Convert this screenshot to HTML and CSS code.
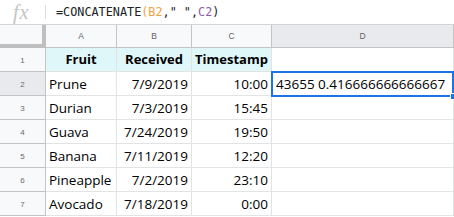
FILE: index.html
```html
<!DOCTYPE html>
<html>
<head>
<meta charset="utf-8">
<link rel="stylesheet" href="styles.css">
</head>
<body>
<div class="sheet">
  <div class="fbar">
    <span class="fx">fx</span>
    <span class="sep"></span>
    <span class="formula">=CONCATENATE<span class="ref1">(B2</span>,"&nbsp;",<span class="ref2">C2</span>)</span>
  </div>
  <div class="grid">
    <div class="corner"></div>
    <div class="colh">A</div>
    <div class="colh">B</div>
    <div class="colh">C</div>
    <div class="colh sel">D</div>

    <div class="rowh">1</div>
    <div class="c hdr">Fruit</div>
    <div class="c hdr">Received</div>
    <div class="c hdr">Timestamp</div>
    <div class="c"></div>

    <div class="rowh sel">2</div>
    <div class="c">Prune</div>
    <div class="c num">7/9/2019</div>
    <div class="c num">10:00</div>
    <div class="c active">43655 0.416666666666667<span class="selbox"><span class="handle"></span></span></div>

    <div class="rowh">3</div>
    <div class="c">Durian</div>
    <div class="c num">7/3/2019</div>
    <div class="c num">15:45</div>
    <div class="c"></div>

    <div class="rowh">4</div>
    <div class="c">Guava</div>
    <div class="c num">7/24/2019</div>
    <div class="c num">19:50</div>
    <div class="c"></div>

    <div class="rowh">5</div>
    <div class="c">Banana</div>
    <div class="c num">7/11/2019</div>
    <div class="c num">12:20</div>
    <div class="c"></div>

    <div class="rowh">6</div>
    <div class="c">Pineapple</div>
    <div class="c num">7/2/2019</div>
    <div class="c num">23:10</div>
    <div class="c"></div>

    <div class="rowh">7</div>
    <div class="c">Avocado</div>
    <div class="c num">7/18/2019</div>
    <div class="c num">0:00</div>
    <div class="c"></div>
  </div>
</div>
</body>
</html>
```

FILE: styles.css
```css
* { box-sizing: border-box; }
html, body { margin: 0; padding: 0; background: #fff; }
body { width: 454px; height: 217px; overflow: hidden; }

.sheet { width: 454px; }

.fbar {
  height: 25px;
  border-bottom: 1px solid #d4d4d4;
  display: flex;
  align-items: center;
}
.fx {
  font-family: "Liberation Serif", serif;
  font-style: italic;
  font-size: 20px;
  color: #c4c4c4;
  letter-spacing: 1px;
  width: 32px;
  margin-left: 13px;
  line-height: 20px;
  margin-top: -1px;
}
.sep {
  width: 1px;
  height: 14px;
  background: #dadce0;
}
.formula {
  margin-left: 10px;
  font-family: "DejaVu Sans Mono", monospace;
  font-size: 11.8px;
  color: #202124;
  white-space: pre;
}
.ref1 { color: #f4a23b; }
.ref2 { color: #8e5cab; }

.grid {
  display: grid;
  grid-template-columns: 46px 71px 75px 80px 182px;
  grid-template-rows: 23px repeat(7, 24px);
}

.corner {
  background: #f8f9fa;
  border-right: 4px solid #bfbfbf;
  border-bottom: 4px solid #bfbfbf;
}
.colh {
  background: #f8f9fa;
  border-right: 1px solid #c4c4c4;
  border-bottom: 1px solid #c4c4c4;
  font-family: "Liberation Sans", Arial, sans-serif;
  font-size: 8.5px;
  color: #5f6368;
  text-align: center;
  line-height: 22px;
}
.rowh {
  background: #f8f9fa;
  border-right: 1px solid #c4c4c4;
  border-bottom: 1px solid #c4c4c4;
  font-family: "Liberation Sans", Arial, sans-serif;
  font-size: 8px;
  color: #6b6b6b;
  text-align: center;
  line-height: 23px;
  padding-top: 1px;
}
.sel { background: #e8eaed; }

.c {
  border-right: 1px solid #e2e3e3;
  border-bottom: 1px solid #e2e3e3;
  font-family: "Open Sans", sans-serif;
  font-size: 13.5px;
  color: #000;
  line-height: 23px;
  padding: 1px 3px 0 3px;
  white-space: nowrap;
}
.hdr {
  background: #e0f7fa;
  font-weight: 700;
  font-size: 13px;
  text-align: center;
  padding: 0;
}
.num { text-align: right; }

.active {
  position: relative;
  padding-left: 4px;
}
.selbox {
  position: absolute;
  left: -1px;
  top: -1px;
  width: 183px;
  height: 26px;
  border: 2px solid #1a73e8;
}
.handle {
  position: absolute;
  right: -4px;
  bottom: -4px;
  width: 6px;
  height: 6px;
  background: #1a73e8;
  border: 1px solid #fff;
  border-right: 0;
  border-bottom: 0;
}
```
